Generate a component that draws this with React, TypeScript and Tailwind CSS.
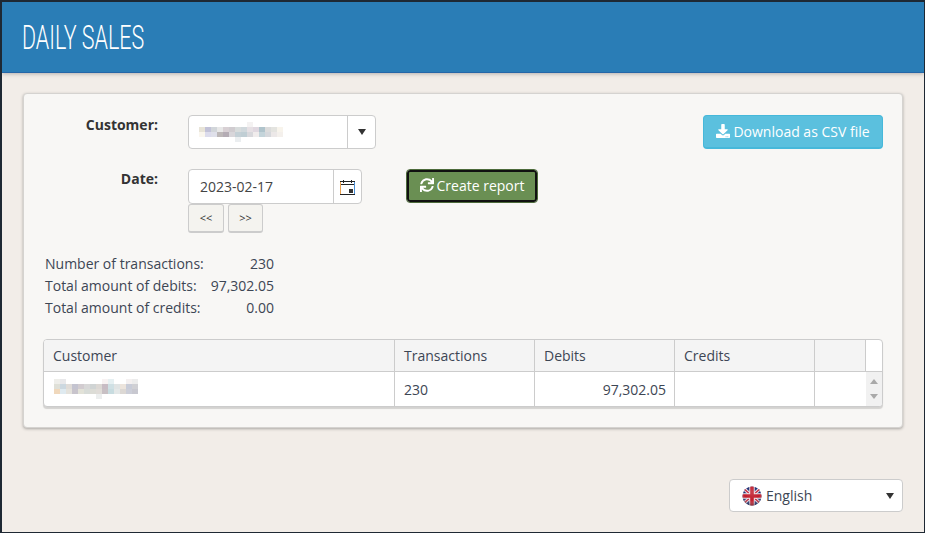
import React from 'react';
import { FaDownload, FaSync } from 'react-icons/fa';

const font = "font-['Open_Sans',sans-serif]";
const W = '#ffffff';

// pixelated patch standing in for the masked customer name
const Mosaic = ({ colors }: { colors: string[][] }) => (
  <svg width={colors[0].length * 6} height={colors.length * 5} className="block" shapeRendering="crispEdges">
    {colors.map((row, y) =>
      row.map((c, x) => <rect key={`${x}-${y}`} x={x * 6} y={y * 5} width="6" height="5" fill={c} />)
    )}
  </svg>
);

const selectBlur = [
  [W, W, W, W, W, W, W, W, '#f4f2f2', W, W, W, W, W],
  ['#e8e4d8', '#c2c2d8', '#d2d6da', '#e8e8e8', '#d8d0d4', '#d0ccd0', '#d8dcdc', '#d0d8dc', '#e6e0e4', '#e0d8e0', '#b0c4cc', '#dcdcdc', '#e4e4e0', '#f8f4ec'],
  ['#faf6ee', '#dcdcec', '#dfe0ea', '#bdb8b8', '#b4acb4', '#d8d6da', '#c4d0d6', '#c0ced4', '#d8d8dc', '#f0ecec', '#c4d4da', '#d6d8dc', '#ece8e8', '#f4f0ec'],
  [W, W, W, W, W, W, '#ebeef0', W, W, W, W, W, W, W],
];

const tableBlur = [
  ['#eeeeea', '#e8e8ea', W, W, W, W, W, W, '#f8f2f2', '#e6f0f2', W, W, '#f4f0f0', '#ececec'],
  ['#dfe0d8', '#ccd8e0', '#e0dcd8', '#c4c4d0', '#d2ccd0', '#d8d8d8', '#d0d4d4', '#dcd8d4', '#c8bcc4', '#cfe0e4', '#e0e4e4', '#ece4dc', '#c8ccd8', '#d0d0d4'],
  ['#f0d8bc', '#dfeaf0', '#e4e2dc', '#c8c4cc', '#e2e2d8', '#d8dcd8', '#dcdcd6', '#e0dcd8', '#c8c0c4', '#c8dce0', '#e4e8e8', '#dcd8d4', '#ccced8', '#c8c8d0'],
  [W, W, W, W, W, W, W, '#eceeee', W, W, W, W, W, W],
];

const Caret = () => (
  <span className="w-0 h-0 border-x-[4px] border-x-transparent border-t-[6px] border-t-[#333]" />
);

const CalendarIcon = () => (
  <svg width="15" height="16" viewBox="0 0 15 16" className="block" shapeRendering="crispEdges">
    <rect x="0.5" y="2.5" width="14" height="13" fill="#fff" stroke="#222" />
    <rect x="1" y="5" width="13" height="1" fill="#222" />
    <rect x="3" y="1" width="1" height="3" fill="#222" />
    <rect x="11" y="1" width="1" height="3" fill="#222" />
    <rect x="9" y="10" width="4" height="4" fill="#333" />
    <rect x="0" y="3" width="1" height="12" fill="#e8a050" />
    <rect x="14" y="3" width="1" height="12" fill="#4a90d8" />
  </svg>
);

const UkFlag = () => (
  <svg width="20" height="20" viewBox="0 0 20 20" className="block">
    <defs>
      <clipPath id="flag"><circle cx="10" cy="10" r="9.5" /></clipPath>
      <radialGradient id="shade" cx="50%" cy="30%" r="75%">
        <stop offset="0%" stopColor="#fff" stopOpacity="0.15" />
        <stop offset="55%" stopColor="#fff" stopOpacity="0" />
        <stop offset="100%" stopColor="#000" stopOpacity="0.6" />
      </radialGradient>
    </defs>
    <g clipPath="url(#flag)">
      <rect width="20" height="20" fill="#1a2a70" />
      <path d="M0 1 L20 19 M20 1 L0 19" stroke="#e8e0e6" strokeWidth="3.4" />
      <path d="M0 1 L20 19 M20 1 L0 19" stroke="#c4263c" strokeWidth="1.4" />
      <path d="M10 0 V20 M0 10 H20" stroke="#f0e6e8" strokeWidth="5.4" />
      <path d="M10 0 V20 M0 10 H20" stroke="#c01c2c" strokeWidth="3.6" />
      <rect width="20" height="20" fill="url(#shade)" />
    </g>
  </svg>
);

const stats = [
  ['Number of transactions:', '230'],
  ['Total amount of debits:', '97,302.05'],
  ['Total amount of credits:', '0.00'],
];

const headCell = 'h-full flex items-center pl-[9px] border-r border-[#ccc] bg-[#f4f4f4]';
const bodyCell = 'h-full flex items-center border-r border-[#ccc]';

export default function App() {
  return (
    <div className={`${font} w-[925px] h-[533px] flex flex-col overflow-hidden bg-[#f2ede8] text-[14px] text-[#3d4654] border-[#1e2833] border-t-2 border-l-2 border-r border-b`}>
      <header className="h-[71px] shrink-0 flex items-center pl-[20px] pt-[2px] bg-[#2a7db6] border-b border-[#2567a8] shadow-[0_1px_4px_rgba(0,0,0,0.25)]">
        <h1 className="font-['Roboto',sans-serif] text-[33px] text-white font-light scale-x-[0.65] origin-left whitespace-nowrap">DAILY SALES</h1>
      </header>

      <main className="flex-1 px-[21px] pt-[20px]">
        <section className="h-[335px] bg-[#f8f7f5] border border-[#d5d3d0] rounded-[4px] shadow-[0_1px_3px_rgba(0,0,0,0.3)] pl-[19px] pr-[19px] pt-[21px]">
          <div className="flex h-[34px] pl-[1px]">
            <label className="w-[114px] text-right font-bold text-[#333] leading-[20px]">Customer:</label>
            <div className="ml-[30px] w-[188px] h-[34px] flex bg-white border border-[#ccc] rounded-[4px]">
              <div className="flex-1 flex items-center pl-[10px]">
                <Mosaic colors={selectBlur} />
              </div>
              <div className="w-[28px] flex items-center justify-center border-l border-[#ccc]"><Caret /></div>
            </div>
            <button className="ml-auto w-[180px] h-[34px] flex items-center justify-center gap-[3px] pb-[1px] bg-[#5bc0de] text-white border border-[#46b8da] border-b-2 rounded-[4px]">
              <FaDownload size={14} />
              Download as CSV file
            </button>
          </div>

          <div className="flex mt-[20px] pl-[1px]">
            <label className="w-[114px] text-right font-bold text-[#333] leading-[20px]">Date:</label>
            <div className="ml-[30px]">
              <div className="w-[174px] h-[35px] flex bg-white border border-[#ccc] rounded-[4px]">
                <div className="flex-1 flex items-center pl-[11px] text-[#444]">2023-02-17</div>
                <div className="w-[28px] flex items-center justify-center border-l border-[#ccc]">
                  <CalendarIcon />
                </div>
              </div>
              <div className="flex gap-[4px]">
                <button className="w-[36px] h-[29px] text-[11px] bg-[#f4f3ef] border border-[#ccc] border-b-2 rounded-[3px] text-[#333]">&lt;&lt;</button>
                <button className="w-[35px] h-[29px] text-[11px] bg-[#f4f3ef] border border-[#ccc] border-b-2 rounded-[3px] text-[#333]">&gt;&gt;</button>
              </div>
            </div>
            <button className="ml-[45px] mt-[1px] w-[130px] h-[32px] flex items-center justify-center gap-[3px] pb-[2px] bg-[#6a8f53] text-white rounded-[3px] border-2 border-[#111] outline outline-1 outline-[#4d6b3b]">
              <FaSync size={14} />
              Create report
            </button>
          </div>

          <div className="mt-[19px] w-[229px] ml-[2px]">
            {stats.map(([k, v]) => (
              <div key={k} className="flex justify-between h-[22px] items-center">
                <span>{k}</span>
                <span>{v}</span>
              </div>
            ))}
          </div>

          <div className="mt-[21px] h-[68px] bg-white border border-[#ccc] rounded-[4px] shadow-[0_2px_1px_rgba(0,0,0,0.15)] overflow-hidden">
            <div className="h-[32px] flex border-b border-[#ccc]">
              <div className={`${headCell} w-[351px]`}>Customer</div>
              <div className={`${headCell} w-[140px]`}>Transactions</div>
              <div className={`${headCell} w-[140px]`}>Debits</div>
              <div className={`${headCell} w-[140px]`}>Credits</div>
              <div className={`${headCell} w-[51px]`} />
            </div>
            <div className="h-[34px] flex">
              <div className={`${bodyCell} w-[351px] pl-[10px]`}>
                <Mosaic colors={tableBlur} />
              </div>
              <div className={`${bodyCell} w-[140px] pl-[9px]`}>230</div>
              <div className={`${bodyCell} w-[140px] justify-end pr-[8px]`}>97,302.05</div>
              <div className={`${bodyCell} w-[140px]`} />
              <div className="h-full w-[51px]" />
              <div className="flex-1 bg-[#f1f1f1] flex flex-col items-center justify-between py-[7px]">
                <span className="w-0 h-0 border-x-[4px] border-x-transparent border-b-[5px] border-b-[#a9a9a9]" />
                <span className="w-0 h-0 border-x-[4px] border-x-transparent border-t-[5px] border-t-[#a9a9a9]" />
              </div>
            </div>
          </div>
        </section>

        <div className="flex justify-end mt-[51px]">
          <div className="w-[174px] h-[33px] flex items-center bg-white border border-[#ccc] rounded-[4px] pl-[12px] pr-[8px]">
            <UkFlag />
            <span className="ml-[4px]">English</span>
            <span className="ml-auto flex"><Caret /></span>
          </div>
        </div>
      </main>
    </div>
  );
}
